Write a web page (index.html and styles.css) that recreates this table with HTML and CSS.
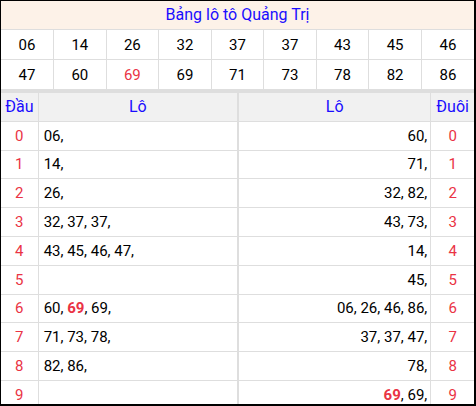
FILE: index.html
```html
<!DOCTYPE html>
<html lang="vi">
<head>
<meta charset="utf-8">
<link rel="stylesheet" href="styles.css">
</head>
<body>
<div class="frame">
  <div class="title">Bảng lô tô Quảng Trị</div>
  <table class="nums">
    <tr><td>06</td><td>14</td><td>26</td><td>32</td><td>37</td><td>37</td><td>43</td><td>45</td><td>46</td></tr>
    <tr><td>47</td><td>60</td><td class="red">69</td><td>69</td><td>71</td><td>73</td><td>78</td><td>82</td><td>86</td></tr>
  </table>
  <table class="lo">
    <colgroup><col class="c-dau"><col class="c-lo1"><col class="c-lo2"><col class="c-duoi"></colgroup>
    <tr class="head"><th>Đầu</th><th class="mid">Lô</th><th>Lô</th><th>Đuôi</th></tr>
    <tr><td class="d">0</td><td class="l mid">06,</td><td class="r">60,</td><td class="d">0</td></tr>
    <tr><td class="d">1</td><td class="l mid">14,</td><td class="r">71,</td><td class="d">1</td></tr>
    <tr><td class="d">2</td><td class="l mid">26,</td><td class="r">32, 82,</td><td class="d">2</td></tr>
    <tr><td class="d">3</td><td class="l mid">32, 37, 37,</td><td class="r">43, 73,</td><td class="d">3</td></tr>
    <tr><td class="d">4</td><td class="l mid">43, 45, 46, 47,</td><td class="r">14,</td><td class="d">4</td></tr>
    <tr><td class="d">5</td><td class="l mid"></td><td class="r">45,</td><td class="d">5</td></tr>
    <tr><td class="d">6</td><td class="l mid">60, <b class="hl">69</b>, 69,</td><td class="r">06, 26, 46, 86,</td><td class="d">6</td></tr>
    <tr><td class="d">7</td><td class="l mid">71, 73, 78,</td><td class="r">37, 37, 47,</td><td class="d">7</td></tr>
    <tr><td class="d">8</td><td class="l mid">82, 86,</td><td class="r">78,</td><td class="d">8</td></tr>
    <tr><td class="d">9</td><td class="l mid"></td><td class="r"><b class="hl">69</b>, 69,</td><td class="d">9</td></tr>
  </table>
</div>
</body>
</html>
```
FILE: styles.css
```css
html, body {
  margin: 0;
  padding: 0;
  background: #fff;
}
body {
  font-family: Roboto, "Liberation Sans", Arial, sans-serif;
  color: #000;
}
.frame {
  width: 476px;
  height: 406px;
  box-sizing: border-box;
  border: 1px solid #000;
  border-right-width: 2px;
  border-bottom-width: 2px;
  overflow: hidden;
}
.title {
  height: 28px;
  line-height: 28px;
  background: #fdf2e8;
  color: #1a0dff;
  font-size: 16px;
  text-align: center;
}
table {
  width: 100%;
  border-collapse: collapse;
  table-layout: fixed;
}
.nums td {
  height: 29px;
  padding: 0;
  border: 1px solid #dedede;
  text-align: center;
  font-size: 15px;
}
.nums td:first-child { border-left: 0; }
.nums td:last-child { border-right: 0; }
.red { color: #ea3344; }
.lo {
  border-top: 3px solid #dedede;
}
.c-dau { width: 37px; }
.c-lo1 { width: 199px; }
.c-lo2 { width: 192px; }
.c-duoi { width: 43px; }
.lo th, .lo td {
  height: 27.8px;
  padding: 0;
  border: 1px solid #dedede;
  font-size: 15px;
  font-weight: normal;
}
.lo tr > :first-child { border-left: 0; }
.lo tr > :last-child { border-right: 0; }
.lo th {
  background: #f1f1f1;
  color: #1a0dff;
  text-align: center;
  font-size: 16px;
}
.lo th.mid, .lo td.mid { border-right-width: 2px; }
.d {
  text-align: center;
  color: #ea3344;
}
.l {
  text-align: left;
  padding-left: 5px !important;
}
.r {
  text-align: right;
  padding-right: 3px !important;
}
.hl {
  color: #ea3344;
  font-weight: bold;
}
```
